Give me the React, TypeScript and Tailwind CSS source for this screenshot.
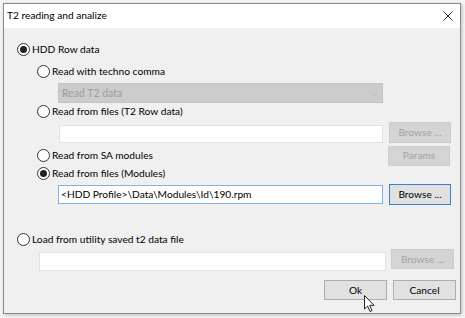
import React from 'react';

function Radio({ checked, label }: { checked?: boolean; label: string }) {
  return (
    <div className="flex items-center h-[16px]">
      <span className="w-[13px] h-[13px] rounded-full border border-[#333333] bg-white flex items-center justify-center shrink-0">
        {checked && <span className="w-[7px] h-[7px] rounded-full bg-[#222222]" />}
      </span>
      <span className="ml-[2px] text-[10.2px] leading-none text-black whitespace-nowrap">{label}</span>
    </div>
  );
}

function Btn({ label, disabled, primary, className = '' }: { label: string; disabled?: boolean; primary?: boolean; className?: string }) {
  const look = disabled
    ? 'bg-[#d4d4d4] border-[#cccccc] text-[#a3a3a3]'
    : primary
    ? 'bg-[#e1e1e1] border-[#3d7fd0] text-black'
    : 'bg-[#e1e1e1] border-[#adadad] text-black';
  return (
    <div className={`flex items-center justify-center border text-[10.2px] leading-none ${look} ${className}`}>
      {label}
    </div>
  );
}

export default function App() {
  return (
    <div className="w-[465px] h-[318px] bg-[#f7f7f7] font-['Lato',sans-serif] relative overflow-hidden">
      <div className="ml-[3px] mt-[3px] w-[458px] h-[311px] border border-[#8a8a8a] bg-[#f0f0f0] shadow-[1px_1px_4px_rgba(0,0,0,0.25)] flex flex-col">
        {/* title bar */}
        <div className="h-[24px] bg-white flex items-center justify-between pl-[3px] pr-[7px] shrink-0">
          <span className="text-[10.2px] text-black">T2 reading and analize</span>
          <svg width="10" height="10" viewBox="0 0 10 10" className="text-[#333]">
            <path d="M0.5 0.5 L9.5 9.5 M9.5 0.5 L0.5 9.5" stroke="currentColor" strokeWidth="1" />
          </svg>
        </div>

        <div className="pl-[13px] pt-[13px]">
          <Radio checked label="HDD Row data" />

          <div className="pl-[20px]">
            <div className="mt-[6px]">
              <Radio label="Read with techno comma" />
            </div>
            <div className="ml-[21px] mt-[4px] w-[325px] h-[20px] bg-[#cccccc] border border-[#c4c4c4] flex items-center justify-between px-[3px]">
              <span className="text-[10.5px] text-[#9d9d9d] leading-none">Read T2 data</span>
              <span className="text-[8px] text-[#bdbdbd] leading-none">⌄</span>
            </div>

            <Radio label="Read from files (T2 Row data)" />
            <div className="flex items-start mt-[3px] h-[21px]">
              <div className="ml-[22px] mt-[3px] w-[324px] h-[18px] bg-white border border-[#e3e3e3]" />
              <Btn disabled label="Browse ..." className="ml-[6px] w-[62px] h-[21px]" />
            </div>

            <div className="flex items-center mt-[3px] h-[19px]">
              <Radio label="Read from SA modules" />
              <Btn disabled label="Params" className="ml-auto mr-[10px] w-[62px] h-[20px]" />
            </div>
            <Radio checked label="Read from files (Modules)" />
            <div className="flex items-start mt-[3px] h-[21px]">
              <div className="ml-[21px] mt-[1px] w-[325px] h-[19px] bg-white border border-[#7eb4ea] flex items-center px-[2px]">
                <span className="text-[10.2px] text-black leading-none whitespace-nowrap">&lt;HDD Profile&gt;\Data\Modules\Id\190.rpm</span>
              </div>
              <Btn primary label="Browse ..." className="ml-[6px] w-[62px] h-[21px]" />
            </div>
          </div>

          <div className="mt-[26px]">
            <Radio label="Load from utility saved t2 data file" />
          </div>
          <div className="flex items-start mt-[2px] h-[22px]">
            <div className="ml-[22px] mt-[3px] w-[347px] h-[19px] bg-white border border-[#e3e3e3]" />
            <Btn disabled label="Browse ..." className="ml-[5px] w-[63px] h-[20px]" />
          </div>

          <div className="flex justify-end gap-[6px] mt-[9px] pr-[4px]">
            <Btn label="Ok" className="w-[63px] h-[20px]" />
            <Btn label="Cancel" className="w-[63px] h-[20px]" />
          </div>
        </div>
      </div>

      {/* mouse pointer */}
      <svg className="absolute left-[364px] top-[295px]" width="12" height="18" viewBox="0 0 12 18">
        <path d="M0.5 0.5 L0.5 14 L3.6 11 L6 16.5 L8 15.6 L5.7 10.3 L10 10.3 Z" fill="white" stroke="#222" strokeWidth="1" strokeLinejoin="round" />
      </svg>
    </div>
  );
}
